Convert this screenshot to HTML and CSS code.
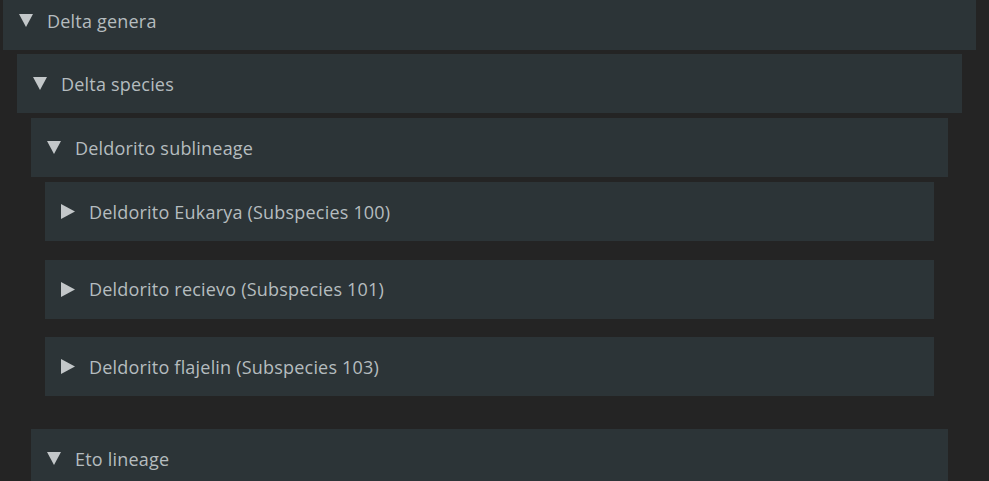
FILE: index.html
```html
<!DOCTYPE html>
<html>
<head>
<meta charset="utf-8">
<link rel="stylesheet" href="styles.css">
</head>
<body>
<div class="tree">
  <div class="node">
    <div class="summary"><svg class="tri" viewBox="0 0 14 13"><polygon points="0,0 14,0 7,13"/></svg><span class="label">Delta genera</span></div>
    <div class="children children--first">
      <div class="node">
        <div class="summary"><svg class="tri" viewBox="0 0 14 13"><polygon points="0,0 14,0 7,13"/></svg><span class="label">Delta species</span></div>
        <div class="children">
          <div class="node">
            <div class="summary"><svg class="tri" viewBox="0 0 14 13"><polygon points="0,0 14,0 7,13"/></svg><span class="label">Deldorito sublineage</span></div>
            <div class="children children--leaves">
              <div class="node node--leaf">
                <div class="summary"><svg class="tri tri--right" viewBox="0 0 14 15"><polygon points="0,0 14,7.5 0,15"/></svg><span class="label">Deldorito Eukarya (Subspecies 100)</span></div>
              </div>
              <div class="node node--leaf">
                <div class="summary"><svg class="tri tri--right" viewBox="0 0 14 15"><polygon points="0,0 14,7.5 0,15"/></svg><span class="label">Deldorito recievo (Subspecies 101)</span></div>
              </div>
              <div class="node node--leaf">
                <div class="summary"><svg class="tri tri--right" viewBox="0 0 14 15"><polygon points="0,0 14,7.5 0,15"/></svg><span class="label">Deldorito flajelin (Subspecies 103)</span></div>
              </div>
            </div>
          </div>
          <div class="node">
            <div class="summary"><svg class="tri" viewBox="0 0 14 13"><polygon points="0,0 14,0 7,13"/></svg><span class="label">Eto lineage</span></div>
          </div>
        </div>
      </div>
    </div>
  </div>
</div>
</body>
</html>
```
FILE: styles.css
```css
html, body {
  margin: 0;
  padding: 0;
  background: #242424;
  height: 100%;
  overflow: hidden;
}
body {
  font-family: "Open Sans", "Noto Sans", sans-serif;
  color: #b5bcbf;
}
.tree {
  padding: 0 13px 0 3px;
  margin-top: -9px;
}
.summary {
  height: 59px;
  background: #2c3437;
  display: flex;
  align-items: center;
  padding-left: 16px;
  box-sizing: border-box;
}
.tri {
  width: 14px;
  height: 13px;
  fill: #c3c7c9;
  flex: none;
  margin-right: 14px;
}
.tri--right {
  height: 15px;
}
.label {
  font-size: 18px;
  line-height: 1;
  letter-spacing: 0.2px;
}
.children {
  padding: 5px 14px 14.5px;
}
.children--first {
  padding-top: 4px;
}
.node--leaf {
  margin-bottom: 18.5px;
}
```
